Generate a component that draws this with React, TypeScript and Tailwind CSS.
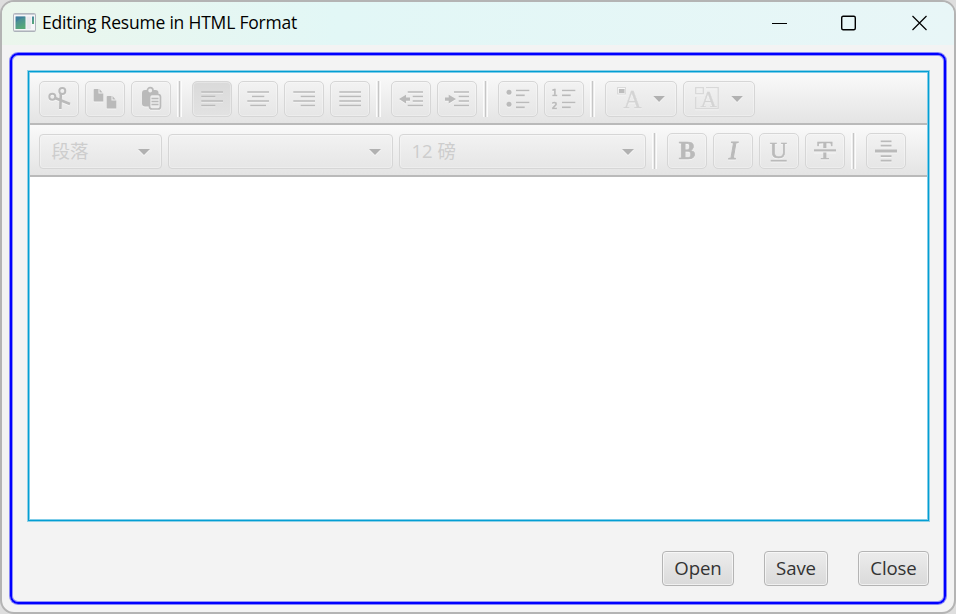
import React from 'react';

const INK = '#bababa';

function IconButton({ children, active = false, wide = false }: { children: React.ReactNode; active?: boolean; wide?: boolean }) {
  return (
    <button
      className={`relative h-9 shrink-0 rounded-[5px] border border-[#d6d6d6] shadow-[inset_0_0_0_1px_rgba(255,255,255,0.3)] ${
        wide ? 'w-[72px]' : 'w-10'
      } ${active ? 'bg-linear-to-b from-[#dadada] to-[#e2e2e2]' : 'bg-linear-to-b from-[#f2f2f2] to-[#e6e6e6]'}`}
    >
      <svg
        className="absolute -top-px -left-px drop-shadow-[0_1px_0_rgba(255,255,255,0.5)]"
        width={wide ? 72 : 40}
        height="36"
        fill="none"
        stroke={INK}
        strokeWidth="1.7"
      >
        {children}
      </svg>
    </button>
  );
}

function Separator() {
  return (
    <div className="mr-[10px] ml-[6px] flex h-9 w-[5px] shrink-0">
      <div className="w-px bg-[#fcfcfc]" />
      <div className="w-px bg-[#ececec]" />
      <div className="w-px bg-[#c6c6c6]" />
      <div className="w-px bg-[#ececec]" />
      <div className="w-px bg-[#fcfcfc]" />
    </div>
  );
}

function Combo({ label, className }: { label: string; className: string }) {
  return (
    <div
      className={`flex h-[35px] shrink-0 items-center justify-between rounded-[4px] border border-[#d6d6d6] bg-linear-to-b from-[#f2f2f2] to-[#e6e6e6] pr-[11px] pl-[11.500px] text-[18.5px] text-[#cdcdcd] shadow-[inset_0_0_0_1px_rgba(255,255,255,0.3)] ${className}`}
    >
      <span className="leading-none">{label}</span>
      <svg width="12" height="6" className="drop-shadow-[0_1px_0_rgba(255,255,255,0.6)]">
        <path d="M0 0H12L6 6Z" fill="#b1b1b1" />
      </svg>
    </div>
  );
}

const serif = '"Liberation Serif", serif';

function Glyph({ x, y, size, children, bold = false, italic = false, fill = INK, weight = 0.6 }: { x: number; y: number; size: number; children: string; bold?: boolean; italic?: boolean; fill?: string; weight?: number }) {
  return (
    <text x={x} y={y} fontSize={size} fontFamily={serif} fontWeight={bold ? 700 : 400} fontStyle={italic ? 'italic' : 'normal'} textAnchor="middle" fill={fill} stroke={fill} strokeWidth={weight}>
      {children}
    </text>
  );
}

function DialogButton({ children, className }: { children: string; className: string }) {
  return (
    <button
      className={`flex h-[35px] items-center justify-center rounded-[4px] border border-[#b4b4b4] bg-linear-to-b from-[#ececec] to-[#dadada] pb-px text-[18.6px] tracking-[-0.1px] text-[#333] shadow-[inset_0_0_0_1px_rgba(255,255,255,0.6)] ${className}`}
    >
      {children}
    </button>
  );
}

function AppIcon() {
  return (
    <svg width="23" height="19" viewBox="0 0 23 19" className="relative -top-px">
      <defs>
        <linearGradient id="pane" x1="0" y1="0" x2="0.4" y2="1">
          <stop offset="0" stopColor="#4382a6" />
          <stop offset="1" stopColor="#58a878" />
        </linearGradient>
      </defs>
      <rect x="0.5" y="0.5" width="22" height="18" rx="1" fill="#f6f6f8" stroke="#b0b5bd" />
      <path d="M1 1.5H22" stroke="#c9cdd5" />
      <rect x="2.5" y="3.5" width="10" height="12.5" fill="url(#pane)" />
      <path d="M3 9Q7 5 12 4V3.500H3Z" fill="#38749b" opacity="0.5" />
      <rect x="13.500" y="3.500" width="4.500" height="12.500" fill="#e9e9ed" />
      <rect x="19" y="3.500" width="2" height="7.500" fill="url(#pane)" />
      <path d="M1 18H22" stroke="#a9afb7" />
    </svg>
  );
}

export default function App() {
  return (
    <div className="h-[614px] w-[956px] overflow-hidden bg-[#dedede] font-['Open_Sans','Noto_Sans_CJK_SC',sans-serif]">
      <div className="flex h-full flex-col overflow-hidden rounded-[14px] border-2 border-[#b4b4b4] bg-[#f3f3f3]">
        <header className="flex h-[43px] shrink-0 items-center bg-linear-to-r from-[#ebf6ec] via-[#e2f7f6] via-35% to-[#e8f6f7] pl-[11px]">
          <AppIcon />
          <h1 className="ml-[6px] w-[700px] pb-[2px] text-[17.5px] tracking-[-0.21px] whitespace-nowrap text-black">Editing Resume in HTML Format</h1>
          <svg className="ml-[28px] -mt-[2px]" width="160" height="20" fill="none" stroke="#000" strokeWidth="1.4">
            <path d="M2 10.500H17" strokeWidth="1" />
            <rect x="71.700" y="3.200" width="13.600" height="13.600" rx="1.500" />
            <path d="M142.500 3L156.500 17M156.500 3L142.500 17" strokeWidth="1.2" />
          </svg>
        </header>

        <main className="mt-[8px] ml-[8px] flex h-[551px] w-[936px] flex-col rounded-[8px] border-2 border-[#0000ff] pt-[15px] pl-[15px] shadow-[0_0_0_1px_rgba(0,0,255,0.45),inset_0_0_0_1px_rgba(0,0,255,0.4)]">
          <section className="flex h-[452px] w-[903px] shrink-0 flex-col border border-[#8fd0e6] bg-white">
            <div className="flex h-full flex-col border border-[#039ed3]">
              <div className="flex h-full flex-col border border-[#7fcde9]">
                <div className="flex h-[52px] shrink-0 items-center border-b-2 border-[#bababa] bg-linear-to-b from-[#fafafa] to-[#e4e4e4] pt-[2px] pl-[9px]">
                  <div className="flex gap-[6px]">
                    <IconButton>
                      <circle cx="23.300" cy="10" r="3" strokeWidth="2" />
                      <circle cx="13.300" cy="15.800" r="3" strokeWidth="2" />
                      <path d="M21.800 13L21.300 28M16 17L31 23" strokeWidth="2.600" />
                    </IconButton>
                    <IconButton>
                      <g fill={INK} stroke="none">
                        <path d="M9.500 8H13.500V12.500H18.300V20.500H9.500Q8.700 20.500 8.700 19.700V8.800Q8.700 8 9.500 8ZM14.500 8L17.500 11.500H14.500Z" />
                        <path d="M22.500 15H26.500V19.500H31.300V27.500H22.500Q21.700 27.500 21.700 26.700V15.800Q21.700 15 22.500 15ZM27.500 15L30.500 18.500H27.500Z" />
                      </g>
                    </IconButton>
                    <IconButton>
                      <rect x="11" y="9" width="16.500" height="16.500" rx="3" fill={INK} stroke="none" />
                      <circle cx="19.200" cy="9.500" r="2.800" fill="#eee" />
                      <rect x="18.500" y="13.500" width="11" height="14.500" rx="2.500" fill="#ededed" />
                      <path d="M20.500 17.500H27.500M20.500 20.500H27.500M20.500 23.500H27.500" strokeWidth="1.300" />
                    </IconButton>
                  </div>
                  <Separator />
                  <div className="flex gap-[6px]">
                    <IconButton active>
                      <path d="M9.300 11H31M9.300 15.500H23.300M9.300 20H31M9.300 24.500H23.300" />
                    </IconButton>
                    <IconButton>
                      <path d="M9.300 11H31M14 15.500H26.300M9.300 20H31M12.300 24.500H28" />
                    </IconButton>
                    <IconButton>
                      <path d="M9.300 11H31M16.700 15.500H31M9.300 20H31M16.700 24.500H31" />
                    </IconButton>
                    <IconButton>
                      <path d="M9.300 11H31M9.300 15.500H31M9.300 20H31M9.300 24.500H31" />
                    </IconButton>
                  </div>
                  <Separator />
                  <div className="flex gap-[6px]">
                    <IconButton>
                      <path d="M16.700 11H32M21.700 15.500H32M21.700 20H32M16.700 24.500H32" />
                      <path d="M8 18L15 13.700V16.500H19V19.700H15V22.500Z" fill={INK} stroke="none" />
                    </IconButton>
                    <IconButton>
                      <path d="M17 11H32M21.700 15.500H32M21.700 20H32M17 24.500H32" />
                      <path d="M19 18L11.700 13.700V16.500H8V19.700H11.700V22.500Z" fill={INK} stroke="none" />
                    </IconButton>
                  </div>
                  <Separator />
                  <div className="flex gap-[6px]">
                    <IconButton>
                      <circle cx="11" cy="11.300" r="2.500" fill={INK} stroke="none" />
                      <circle cx="11" cy="23.300" r="2.500" fill={INK} stroke="none" />
                      <path d="M18 9.500H31.300M18 14.300H26.700M18 21.500H31.300M18 26.300H26.700" />
                    </IconButton>
                    <IconButton>
                      <path d="M18 9.500H31.300M18 14.300H26.700M18 21.500H31.300M18 26.300H26.700" />
                      <text x="7.700" y="15" fontSize="9.500" fontFamily='"DejaVu Sans Mono", monospace' fontWeight="700" fill={INK} strokeWidth="0.4">1</text>
                      <text x="7.700" y="27.500" fontSize="9.500" fontFamily='"DejaVu Sans Mono", monospace' fontWeight="700" fill={INK} strokeWidth="0.4">2</text>
                    </IconButton>
                  </div>
                  <Separator />
                  <div className="flex gap-[6px]">
                    <IconButton wide>
                      <Glyph x={27.500} y={27} size={25} fill="#d4d4d4" weight={0.3}>A</Glyph>
                      <rect x="12.500" y="6.500" width="8" height="6.500" stroke="#dadada" strokeWidth="1" />
                      <rect x="14" y="8" width="5.500" height="4" fill="#bdbdbd" stroke="none" />
                      <path d="M48.300 15H59.900L54.100 21Z" fill="#b1b1b1" stroke="none" />
                    </IconButton>
                    <IconButton wide>
                      <path d="M23 6.700H35.200V27.700H12.700V16" stroke="#d8d8d8" strokeWidth="1.300" />
                      <rect x="12.700" y="6.700" width="7.600" height="6" stroke="#d8d8d8" strokeWidth="1.300" />
                      <Glyph x={25.500} y={26} size={22.500} fill="#d4d4d4" weight={0.3}>A</Glyph>
                      <path d="M48.300 15H59.900L54.100 21Z" fill="#b1b1b1" stroke="none" />
                    </IconButton>
                  </div>
                </div>

                <div className="flex h-[52px] shrink-0 items-center border-b-2 border-[#bababa] bg-linear-to-b from-[#fafafa] to-[#e4e4e4] pt-[2px] pl-[9px]">
                  <div className="flex gap-[6px] pt-px">
                    <Combo label="段落" className="w-[123px]" />
                    <Combo label="" className="w-[225px]" />
                    <Combo label="12 磅" className="w-[247px]" />
                  </div>
                  <Separator />
                  <div className="flex gap-[6px]">
                    <IconButton>
                      <Glyph x={20} y={26} size={25} bold>B</Glyph>
                    </IconButton>
                    <IconButton>
                      <Glyph x={20} y={26} size={25.500} italic weight={1}>I</Glyph>
                    </IconButton>
                    <IconButton>
                      <Glyph x={19.500} y={24.700} size={24}>U</Glyph>
                      <path d="M11.700 27.700H27.700" />
                    </IconButton>
                    <IconButton>
                      <Glyph x={20} y={26} size={25}>T</Glyph>
                      <path d="M9 17.300H31" stroke="#ececec" strokeWidth="4.500" />
                      <path d="M9 17.300H31" strokeWidth="2" />
                    </IconButton>
                  </div>
                  <Separator />
                  <IconButton>
                    <path d="M14.700 8.300H25.500M14.700 12.700H25.500M14.700 23.200H25.500M14.700 27.700H25.500" />
                    <path d="M9 18H31" strokeWidth="3" />
                  </IconButton>
                </div>
                <div className="flex-1 bg-white" />
              </div>
            </div>
          </section>

          <footer className="mt-[29px] flex w-[902px] justify-end gap-[30px]">
            <DialogButton className="w-[72px]">Open</DialogButton>
            <DialogButton className="w-[64px]">Save</DialogButton>
            <DialogButton className="w-[71px]">Close</DialogButton>
          </footer>
        </main>
      </div>
    </div>
  );
}
